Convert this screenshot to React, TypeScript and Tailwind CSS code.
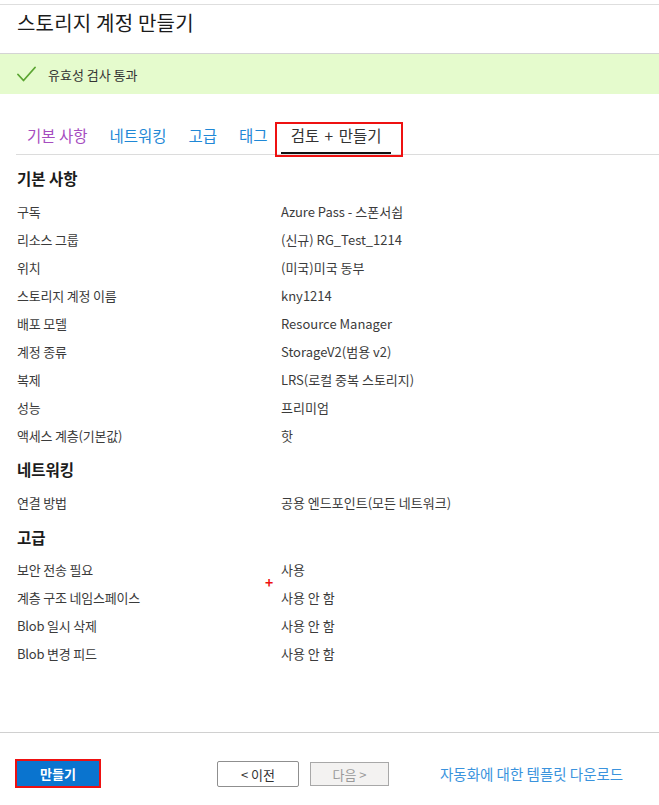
import React from "react";

const basic: [string, string][] = [
  ["구독", "Azure Pass - 스폰서쉽"],
  ["리소스 그룹", "(신규) RG_Test_1214"],
  ["위치", "(미국)미국 동부"],
  ["스토리지 계정 이름", "kny1214"],
  ["배포 모델", "Resource Manager"],
  ["계정 종류", "StorageV2(범용 v2)"],
  ["복제", "LRS(로컬 중복 스토리지)"],
  ["성능", "프리미엄"],
  ["액세스 계층(기본값)", "핫"],
];

const networking: [string, string][] = [["연결 방법", "공용 엔드포인트(모든 네트워크)"]];

const advanced: [string, string][] = [
  ["보안 전송 필요", "사용"],
  ["계층 구조 네임스페이스", "사용 안 함"],
  ["Blob 일시 삭제", "사용 안 함"],
  ["Blob 변경 피드", "사용 안 함"],
];

function Row({ label, value }: { label: string; value: string }) {
  return (
    <div className="flex h-[28px] items-center text-[13px] leading-none text-[#3b3b3b]">
      <div className="w-[264px] shrink-0 tracking-[-0.2px]">{label}</div>
      <div>{value}</div>
    </div>
  );
}

function Heading({ children, className = "" }: { children: React.ReactNode; className?: string }) {
  return (
    <div className={"flex items-center text-[15.5px] font-bold leading-none text-[#1b1b1b] " + className}>
      {children}
    </div>
  );
}

export default function App() {
  return (
    <div className="flex h-[805px] w-[659px] flex-col bg-white font-['Noto_Sans_CJK_KR',sans-serif] text-[#333]">
      {/* title */}
      <div className="mt-[4px] h-[49px] border-t border-[#dedede] pl-[17px] pt-[6px]">
        <div className="text-[20px] leading-[24px] tracking-[0.2px] text-[#1b1b1b]">스토리지 계정 만들기</div>
      </div>

      {/* validation banner */}
      <div className="flex h-[41px] items-center border-t border-[#d4d4d4] bg-[#e5fbcd] pl-[17px]">
        <svg width="19" height="16" viewBox="0 0 19 16" className="mt-[-1px]">
          <path d="M1 8.5 L6.5 14.5 L18 1.5" fill="none" stroke="#5ba532" strokeWidth="1.8" strokeLinecap="round" strokeLinejoin="round" />
        </svg>
        <span className="ml-[12px] text-[13px] leading-none text-[#333]">유효성 검사 통과</span>
      </div>

      {/* tabs */}
      <div className="ml-[16px] mt-[24px] flex h-[37px] border-b border-[#dcdcdc] text-[15.5px] leading-none">
        <div className="flex items-center px-[11px] text-[#a64dbf]">기본 사항</div>
        <div className="flex items-center px-[11px] text-[#1f88d6]">네트워킹</div>
        <div className="flex items-center px-[11px] text-[#1f88d6]">고급</div>
        <div className="flex items-center px-[11px] text-[#1f88d6]">태그</div>
        <div className="relative ml-[2px] flex items-center px-[10px] text-[#333] [word-spacing:2px]">
          검토 + 만들기
          <div className="absolute bottom-0 left-0 right-0 h-[2px] bg-[#111]" />
          <div className="absolute bottom-[-3px] left-[-6px] right-[-12px] top-[4px] border-2 border-[#ee1111]" />
        </div>
      </div>

      {/* content */}
      <div className="relative flex-1 px-[17px] pt-[6px]">
        <Heading className="h-[36px]">기본 사항</Heading>
        {basic.map(([l, v]) => (
          <Row key={l} label={l} value={v} />
        ))}
        <Heading className="mt-[3px] h-[36px]">네트워킹</Heading>
        {networking.map(([l, v]) => (
          <Row key={l} label={l} value={v} />
        ))}
        <Heading className="mt-[5px] h-[34px]">고급</Heading>
        <div className="relative">
          {advanced.map(([l, v]) => (
            <Row key={l} label={l} value={v} />
          ))}
          <span className="absolute left-[248px] top-[20px] text-[14px] font-bold leading-none text-[#ee1111]">+</span>
        </div>
      </div>

      {/* footer */}
      <div className="flex h-[73px] items-start border-t border-[#d0d0d0] pl-[15px] pt-[26px]">
        <div className="border-2 border-[#ee1111]">
          <div className="flex h-[25px] w-[82px] items-center justify-center bg-[#0a74cf] text-[13px] font-bold leading-none text-white">
            만들기
          </div>
        </div>
        <div className="ml-[116px] mt-[2px] flex h-[26px] w-[82px] items-center justify-center rounded-[2px] border border-[#8f8f8f] bg-white text-[13px] leading-none text-[#333]">
          &lt; 이전
        </div>
        <div className="ml-[11px] mt-[3px] flex h-[24px] w-[79px] items-center justify-center border border-[#a8a8a8] bg-[#f3f2f1] text-[13px] leading-none text-[#9a9a9a]">
          다음 &gt;
        </div>
        <div className="ml-[51px] mt-[5px] text-[14.5px] leading-[20px] text-[#3a93dd]">자동화에 대한 템플릿 다운로드</div>
      </div>
    </div>
  );
}
